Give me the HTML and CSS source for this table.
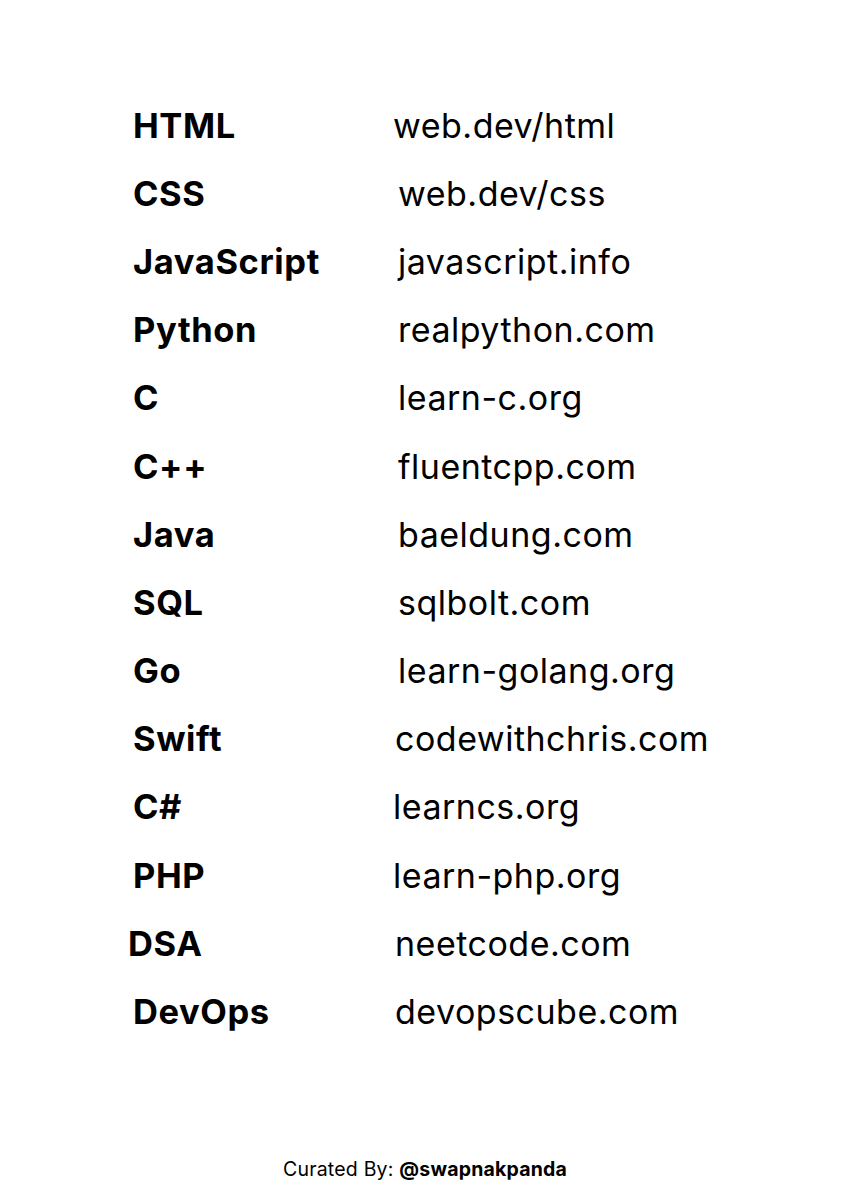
FILE: index.html
```html
<!DOCTYPE html>
<html>
<head>
<meta charset="utf-8">
<link rel="stylesheet" href="styles.css">
</head>
<body>
<main class="page">
  <div class="list">
    <div class="row"><span class="lang">HTML</span><span class="url shift-l">web.dev/html</span></div>
    <div class="row"><span class="lang">CSS</span><span class="url">web.dev/css</span></div>
    <div class="row"><span class="lang">JavaScript</span><span class="url">javascript.info</span></div>
    <div class="row"><span class="lang">Python</span><span class="url">realpython.com</span></div>
    <div class="row"><span class="lang">C</span><span class="url">learn-c.org</span></div>
    <div class="row"><span class="lang">C++</span><span class="url">fluentcpp.com</span></div>
    <div class="row"><span class="lang">Java</span><span class="url">baeldung.com</span></div>
    <div class="row"><span class="lang">SQL</span><span class="url">sqlbolt.com</span></div>
    <div class="row"><span class="lang">Go</span><span class="url">learn-golang.org</span></div>
    <div class="row"><span class="lang">Swift</span><span class="url shift-s">codewithchris.com</span></div>
    <div class="row"><span class="lang">C#</span><span class="url shift-l">learncs.org</span></div>
    <div class="row"><span class="lang">PHP</span><span class="url shift-l">learn-php.org</span></div>
    <div class="row"><span class="lang shift-lang">DSA</span><span class="url shift-s">neetcode.com</span></div>
    <div class="row"><span class="lang">DevOps</span><span class="url shift-s">devopscube.com</span></div>
  </div>
  <footer class="credit">Curated By: <strong>@swapnakpanda</strong></footer>
</main>
</body>
</html>
```
FILE: styles.css
```css
* { box-sizing: border-box; }
html, body { margin: 0; padding: 0; background: #ffffff; }
.page {
  width: 848px;
  height: 1200px;
  display: flex;
  flex-direction: column;
  color: #000;
  font-family: "Inter", "Open Sans", sans-serif;
}
.list {
  padding: 91px 0 0 133px;
  display: flex;
  flex-direction: column;
}
.row {
  display: grid;
  grid-template-columns: 265px 1fr;
  align-items: center;
  height: 68.2px;
}
.lang {
  font-weight: 700;
  font-size: 34.5px;
  letter-spacing: 0.6px;
}
.url {
  font-weight: 400;
  font-size: 34px;
  letter-spacing: 0.5px;
}
.shift-l { margin-left: -5px; }
.shift-s { margin-left: -3px; }
.shift-lang { margin-left: -5px; }
.credit {
  margin-top: auto;
  margin-bottom: 19px;
  padding-left: 283px;
  font-size: 19.5px;
  letter-spacing: 0.2px;
}
.credit strong { font-weight: 700; }
```
